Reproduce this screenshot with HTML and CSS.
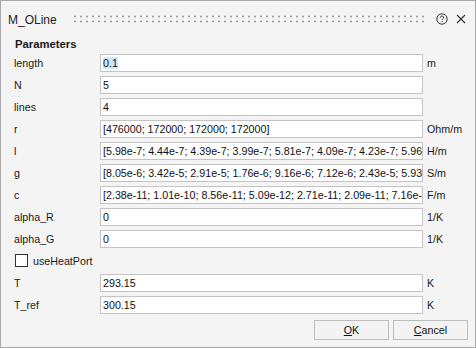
FILE: index.html
```html
<!DOCTYPE html>
<html lang="en">
<head>
    <meta charset="UTF-8">
    <title>M_OLine</title>
    <link rel="stylesheet" href="styles.css">
</head>
<body>

<div class="dialog">
    <div class="titlebar">
        <span class="title">M_OLine</span>
        <span class="grip"></span>
        <svg class="icon" width="12" height="12" viewBox="0 0 12 12">
            <circle cx="6" cy="6" r="5.2" fill="none" stroke="#333" stroke-width="1"/>
            <path d="M4.3 4.7 C4.3 3.6 5 3.1 6 3.1 C7 3.1 7.7 3.7 7.7 4.5 C7.7 5.5 6.2 5.6 6.2 6.9" fill="none" stroke="#333" stroke-width="1"/>
            <rect x="5.7" y="8" width="1" height="1" fill="#333"/>
        </svg>
        <svg class="icon close" width="10" height="10" viewBox="0 0 10 10">
            <path d="M1 1 L9 9 M9 1 L1 9" stroke="#333" stroke-width="1.1"/>
        </svg>
    </div>

    <div class="group">
        <div class="group-title">Parameters</div>

        <div class="row">
            <span class="label">length</span>
            <div class="field"><span class="sel">0.1</span></div>
            <span class="unit">m</span>
        </div>
        <div class="row">
            <span class="label">N</span>
            <div class="field">5</div>
            <span class="unit"></span>
        </div>
        <div class="row">
            <span class="label">lines</span>
            <div class="field">4</div>
            <span class="unit"></span>
        </div>
        <div class="row">
            <span class="label">r</span>
            <div class="field">[476000; 172000; 172000; 172000]</div>
            <span class="unit">Ohm/m</span>
        </div>
        <div class="row">
            <span class="label">l</span>
            <div class="field">[5.98e-7; 4.44e-7; 4.39e-7; 3.99e-7; 5.81e-7; 4.09e-7; 4.23e-7; 5.96</div>
            <span class="unit">H/m</span>
        </div>
        <div class="row">
            <span class="label">g</span>
            <div class="field">[8.05e-6; 3.42e-5; 2.91e-5; 1.76e-6; 9.16e-6; 7.12e-6; 2.43e-5; 5.93</div>
            <span class="unit">S/m</span>
        </div>
        <div class="row">
            <span class="label">c</span>
            <div class="field">[2.38e-11; 1.01e-10; 8.56e-11; 5.09e-12; 2.71e-11; 2.09e-11; 7.16e-</div>
            <span class="unit">F/m</span>
        </div>
        <div class="row">
            <span class="label">alpha_R</span>
            <div class="field">0</div>
            <span class="unit">1/K</span>
        </div>
        <div class="row">
            <span class="label">alpha_G</span>
            <div class="field">0</div>
            <span class="unit">1/K</span>
        </div>
        <div class="row check-row">
            <span class="checkbox"></span>
            <span>useHeatPort</span>
        </div>
        <div class="row">
            <span class="label">T</span>
            <div class="field">293.15</div>
            <span class="unit">K</span>
        </div>
        <div class="row">
            <span class="label">T_ref</span>
            <div class="field">300.15</div>
            <span class="unit">K</span>
        </div>
    </div>

    <div class="buttons">
        <button><u>O</u>K</button>
        <button><u>C</u>ancel</button>
    </div>
</div>

</body>
</html>
```

FILE: styles.css
```css
body {
    margin: 0;
    font-family: "Liberation Sans", Arial, sans-serif;
    font-size: 10.7px;
    color: #1a1a1a;
    background: #f4f4f4;
}
.dialog {
    width: 476px;
    height: 348px;
    box-sizing: border-box;
    border: 1px solid #a9a9a9;
    background: #f4f4f4;
    display: flex;
    flex-direction: column;
}
.titlebar {
    height: 36px;
    display: flex;
    align-items: center;
    padding: 0 9px 0 7px;
}
.title {
    font-size: 12px;
    color: #222;
    margin-top: 2px;
}
.grip {
    flex: 1;
    height: 10px;
    margin: 0 5px 0 15px;
    background-image: radial-gradient(circle, #9c9c9c 0.9px, transparent 1.2px);
    background-size: 6px 5px;
}
.icon {
    margin-left: 7px;
}
.close {
    margin-left: 8px;
}
.group {
    padding: 0 8px 0 13px;
}
.group-title {
    font-weight: bold;
    font-size: 11.3px;
    height: 15px;
    line-height: 15px;
    padding-left: 1px;
}
.row {
    height: 22px;
    display: flex;
    align-items: center;
}
.label {
    width: 86px;
}
.field {
    width: 317px;
    height: 16px;
    line-height: 16px;
    border: 1px solid #c4c4c4;
    background: white;
    padding: 0 2px;
    white-space: nowrap;
    overflow: hidden;
    color: #111;
}
.sel {
    background: #cce8ff;
}
.unit {
    margin-left: 4px;
}
.checkbox {
    width: 11px;
    height: 11px;
    border: 1px solid #333;
    background: white;
    margin: -2px 5px 0 1px;
}
.buttons {
    display: flex;
    justify-content: flex-end;
    gap: 4px;
    padding: 4px 7px 0 0;
}
button {
    width: 75px;
    height: 20px;
    font-family: "Liberation Sans", Arial, sans-serif;
    font-size: 10.7px;
    color: #111;
    background: #f3f3f3;
    border: 1px solid #bcbcbc;
    padding: 0;
}
```
